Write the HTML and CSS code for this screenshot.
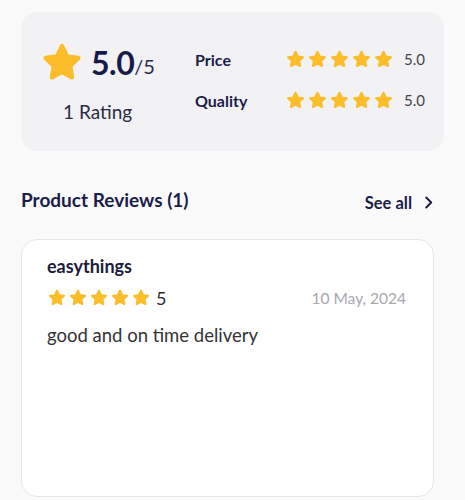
FILE: index.html
```html
<!DOCTYPE html>
<html>
<head>
<meta charset="utf-8">
<link rel="stylesheet" href="styles.css">
</head>
<body>
<svg width="0" height="0" class="defs">
  <defs>
    <symbol id="star" viewBox="0 0 24 24">
      <path d="M12 3.2l2.6 5.4 5.9.8-4.3 4.1 1 5.9L12 16.6l-5.2 2.8 1-5.9-4.3-4.1 5.9-.8z" fill="#fbbd2a" stroke="#fbbd2a" stroke-width="2.4" stroke-linejoin="round"/>
    </symbol>
  </defs>
</svg>
<div class="page">
  <section class="summary">
    <div class="overall">
      <div class="score">
        <svg class="big-star"><use href="#star"/></svg>
        <span class="num">5.0</span><span class="out">/5</span>
      </div>
      <div class="count">1 Rating</div>
    </div>
    <div class="aspects">
      <div class="aspect">
        <span class="label">Price</span>
        <span class="stars">
          <svg><use href="#star"/></svg><svg><use href="#star"/></svg><svg><use href="#star"/></svg><svg><use href="#star"/></svg><svg><use href="#star"/></svg>
        </span>
        <span class="val">5.0</span>
      </div>
      <div class="aspect">
        <span class="label">Quality</span>
        <span class="stars">
          <svg><use href="#star"/></svg><svg><use href="#star"/></svg><svg><use href="#star"/></svg><svg><use href="#star"/></svg><svg><use href="#star"/></svg>
        </span>
        <span class="val">5.0</span>
      </div>
    </div>
  </section>

  <div class="head">
    <h2>Product Reviews (1)</h2>
    <a class="see">See all
      <svg viewBox="0 0 10 16"><path d="M2.5 2.5L8 8l-5.5 5.5" fill="none" stroke="#1c1c4a" stroke-width="2.2" stroke-linecap="round" stroke-linejoin="round"/></svg>
    </a>
  </div>

  <article class="review">
    <div class="user">easythings</div>
    <div class="meta">
      <span class="stars small">
        <svg><use href="#star"/></svg><svg><use href="#star"/></svg><svg><use href="#star"/></svg><svg><use href="#star"/></svg><svg><use href="#star"/></svg>
      </span>
      <span class="rnum">5</span>
      <span class="date">10 May, 2024</span>
    </div>
    <p class="text">good and on time delivery</p>
  </article>
</div>
</body>
</html>
```
FILE: styles.css
```css
* { box-sizing: border-box; }
html, body { margin: 0; padding: 0; }
body {
  background: #fafafa;
  font-family: "Lato", "Open Sans", sans-serif;
  color: #1c1c4a;
  width: 465px;
  height: 500px;
  overflow: hidden;
}
.defs { position: absolute; }
.page { padding: 12px 21px 0 21px; }
.summary {
  background: #f2f2f4;
  border-radius: 16px;
  height: 139px;
  display: flex;
  align-items: center;
  padding: 0 0 0 21px;
}
.overall { width: 153px; display: flex; flex-direction: column; }
.score { display: flex; align-items: center; height: 44px; }
.big-star { width: 46px; height: 46px; margin-left: -3px; margin-right: 6px; }
.num { font-size: 32px; font-weight: 700; color: #1a1a4a; letter-spacing: -0.5px; }
.out { font-size: 20px; color: #2a2a50; margin-top: 6px; }
.count { font-size: 19px; color: #2b2b45; margin-top: 15px; padding-left: 21px; }
.aspects { display: flex; flex-direction: column; gap: 20px; margin-top: -4px; }
.aspect { display: flex; align-items: center; height: 21px; }
.label { width: 90px; font-size: 16px; font-weight: 700; color: #1c1c4a; }
.stars { display: flex; gap: 1px; }
.stars svg { width: 21px; height: 21px; }
.val { font-size: 15px; color: #444; margin-left: 10px; }
.head {
  display: flex;
  justify-content: space-between;
  align-items: center;
  margin-top: 35px;
  height: 26px;
  padding-right: 11px;
}
h2 { margin: 0; font-size: 19px; font-weight: 700; color: #1c1c4a; }
.see { display: flex; align-items: center; gap: 12px; font-size: 16.5px; font-weight: 700; color: #1c1c4a; margin-top: 7px; }
.see svg { width: 9px; height: 15px; }
.review {
  margin-top: 27px;
  width: 413px;
  height: 258px;
  background: #fff;
  border: 1px solid #e6e6e8;
  border-radius: 16px;
  padding: 15px 27px 0 25px;
}
.user { font-size: 18px; font-weight: 700; color: #1c1c3a; }
.meta { display: flex; align-items: center; margin-top: 10px; height: 22px; }
.stars.small { gap: 1px; }
.stars.small svg { width: 20px; height: 20px; }
.rnum { font-size: 18px; color: #2a2a3a; margin-left: 5px; }
.date { margin-left: auto; font-size: 15.5px; color: #a8a8ae; }
.text { margin: 15px 0 0 0; font-size: 18.5px; color: #333; }
```
